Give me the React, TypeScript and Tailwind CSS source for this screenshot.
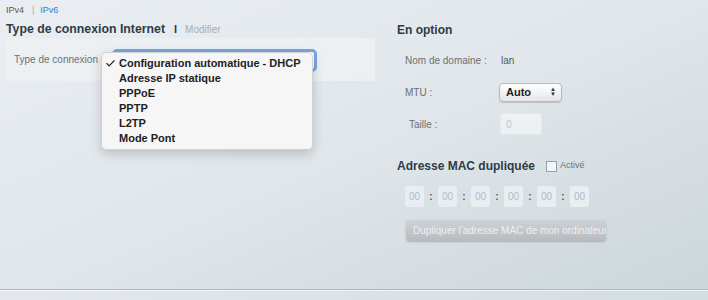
import { Check } from 'lucide-react'

const options = ['Configuration automatique - DHCP', 'Adresse IP statique', 'PPPoE', 'PPTP', 'L2TP', 'Mode Pont']

function MacField() {
  return (
    <div className="w-[19px] h-[21px] rounded-[3px] bg-[#e9eef2] flex items-center justify-center text-[10px] text-[#a9bccb]">
      00
    </div>
  )
}

export default function App() {
  return (
    <div className="w-[708px] h-[300px] overflow-hidden flex flex-col bg-gradient-to-br from-[#eaeef2] via-[#e0e6ea] to-[#cbd5da] font-['Liberation_Sans',Arial,sans-serif] text-[#2f3b46]">
      <div className="h-[21px] pt-[1px] pl-[6px] flex items-center gap-[6px] text-[9px]">
        <span className="text-[#555]">IPv4</span>
        <span className="text-[#aaa] ml-[2px]">|</span>
        <span className="text-[#2f80d1]">IPv6</span>
      </div>

      <div className="flex flex-1">
        {/* left column */}
        <div className="w-[375px] pl-[5px]">
          <div className="h-[17px] flex items-center pl-[1px]">
            <span className="text-[12.3px] font-bold">Type de connexion Internet</span>
            <span className="ml-[9px] text-[11px] font-bold">I</span>
            <span className="ml-[8px] text-[10px] text-[#a8adb2]">Modifier</span>
          </div>
          <div className="relative h-[43px] bg-[#eef1f4]/80 flex items-center">
            <span className="ml-[9px] text-[10px] text-[#6b6f73]">Type de connexion :</span>
            <div className="absolute left-[107px] top-[11px] w-[205px] h-[23px] rounded-[5px] border-[3px] border-[#7aa5e0] bg-white" />
            <div className="absolute left-[96px] top-[14px] w-[212px] py-[3px] rounded-[5px] border border-[#cfd2d5] bg-[#f6f6f6] shadow-[0_4px_12px_rgba(0,0,0,0.18)] z-10">
              {options.map((o, i) => (
                <div key={o} className="flex items-center h-[15px] text-[11px] font-bold text-[#222]">
                  <span className="w-[17px] pl-[3px] flex items-center">
                    {i === 0 && <Check size={11} strokeWidth={2.5} />}
                  </span>
                  {o}
                </div>
              ))}
            </div>
          </div>
        </div>

        {/* right column */}
        <div className="flex-1 pl-[22px]">
          <div className="h-[17px] flex items-center text-[12px] font-bold">En option</div>
          <div className="pl-[8px] text-[10px] text-[#6b6f73]">
            <div className="h-[32px] mt-[6px] flex items-center">
              <span className="w-[96px]">Nom de domaine :</span>
              <span className="text-[#555]">lan</span>
            </div>
            <div className="h-[32px] flex items-center">
              <span className="w-[94px]">MTU :</span>
              <div className="w-[63px] h-[19px] rounded-[4px] border border-[#b5b9bd] bg-gradient-to-b from-white to-[#e4e6e8] shadow-[0_1px_1px_rgba(0,0,0,0.15)] flex items-center justify-between pl-[6px] pr-[5px]">
                <span className="text-[11px] font-bold text-[#222]">Auto</span>
                <span className="flex flex-col text-[6px] leading-[5px] text-[#333]">
                  <span>▲</span>
                  <span>▼</span>
                </span>
              </div>
            </div>
            <div className="h-[32px] flex items-center">
              <span className="w-[95px] pl-[4px]">Taille :</span>
              <div className="w-[42px] h-[22px] rounded-[3px] bg-[#edf1f4] border border-[#e4e9ec] flex items-center pl-[5px] text-[#bcc6ce]">0</div>
            </div>
          </div>

          <div className="mt-[18px] h-[16px] flex items-center">
            <span className="text-[12px] font-bold">Adresse MAC dupliquée</span>
            <span className="ml-[11px] w-[11px] h-[11px] border border-[#8fa3b0] bg-[#f2f6f8]" />
            <span className="ml-[3px] text-[9px] text-[#6b7680]">Activé</span>
          </div>

          <div className="mt-[12px] ml-[8px] flex items-center">
            {[0, 1, 2, 3, 4, 5].map(i => (
              <div key={i} className="flex items-center">
                {i > 0 && <span className="w-[14px] text-center text-[10px] font-bold text-[#555]">:</span>}
                <MacField />
              </div>
            ))}
          </div>

          <div className="mt-[13px] ml-[9px] w-[200px] h-[21px] overflow-hidden rounded-[3px] bg-gradient-to-b from-[#cfd2d5] to-[#b7bbbf] shadow-[0_1px_2px_rgba(0,0,0,0.2)] flex items-center pl-[7px] whitespace-nowrap text-[10px] text-[#eef0f2]">
            Dupliquer l'adresse MAC de mon ordinateur
          </div>
        </div>
      </div>

      <div className="h-[11px] border-t border-[#aebabe] bg-gradient-to-r from-[#e3e8ee] to-[#d3dee2] shadow-[inset_0_1px_0_rgba(255,255,255,0.6)]" />
    </div>
  )
}
